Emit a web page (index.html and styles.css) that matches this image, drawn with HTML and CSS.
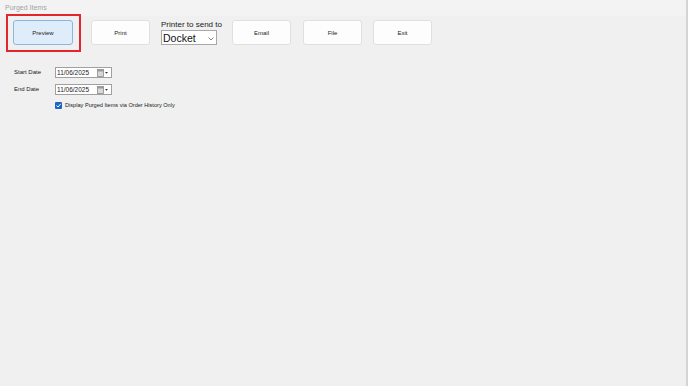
FILE: index.html
```html
<!DOCTYPE html>
<html>
<head>
<meta charset="utf-8">
<link rel="stylesheet" href="styles.css">
</head>
<body>
<div class="window">
  <div class="titlebar">Purged Items</div>
  <div class="toolbar">
    <button class="btn btn-preview">Preview</button>
    <button class="btn btn-print">Print</button>
    <div class="printer">
      <div class="printer-label">Printer to send to</div>
      <div class="select">
        <span>Docket</span>
        <svg class="chev" width="6" height="4" viewBox="0 0 6 4"><path d="M0.5 0.5 L3 3 L5.5 0.5" fill="none" stroke="#666" stroke-width="0.8"/></svg>
      </div>
    </div>
    <button class="btn btn-email">Email</button>
    <button class="btn btn-file">File</button>
    <button class="btn btn-exit">Exit</button>
  </div>
  <div class="form">
    <div class="row">
      <span class="label">Start Date</span>
      <div class="date">
        <span class="date-text">11/06/2025</span>
        <svg class="cal" width="12" height="8" viewBox="0 0 12 8"><rect x="0.5" y="0.5" width="6" height="7" fill="#d8d8d8" stroke="#8a8a8a" stroke-width="0.8"/><rect x="0.5" y="0.5" width="6" height="2" fill="#9a9a9a"/><path d="M8 3 L11 3 L9.5 4.8 Z" fill="#333"/></svg>
      </div>
    </div>
    <div class="row row-end">
      <span class="label">End Date</span>
      <div class="date">
        <span class="date-text">11/06/2025</span>
        <svg class="cal" width="12" height="8" viewBox="0 0 12 8"><rect x="0.5" y="0.5" width="6" height="7" fill="#d8d8d8" stroke="#8a8a8a" stroke-width="0.8"/><rect x="0.5" y="0.5" width="6" height="2" fill="#9a9a9a"/><path d="M8 3 L11 3 L9.5 4.8 Z" fill="#333"/></svg>
      </div>
    </div>
    <div class="check-row">
      <span class="checkbox"><svg width="7" height="7" viewBox="0 0 7 7"><path d="M1.5 3.6 L3 5 L5.6 1.9" fill="none" stroke="#fff" stroke-width="1"/></svg></span>
      <span class="check-label">Display Purged Items via Order History Only</span>
    </div>
  </div>
</div>
</body>
</html>
```

FILE: styles.css
```css
html, body {
  margin: 0;
  padding: 0;
  background: #f0f0f0;
  width: 688px;
  height: 386px;
  overflow: hidden;
  font-family: "Liberation Sans", Arial, sans-serif;
}
.window {
  width: 686px;
  height: 386px;
  border-right: 2px solid #d4d4d4;
  background: #f0f0f0;
}
.titlebar {
  height: 16px;
  background: #f3f3f3;
  color: #a3a3a3;
  font-size: 7px;
  line-height: 15px;
  padding-left: 5px;
  box-sizing: border-box;
}
.toolbar {
  display: flex;
  align-items: flex-start;
  padding: 4px 0 0 13px;
  height: 30px;
}
.btn {
  height: 25px;
  width: 59px;
  background: #fdfdfd;
  border: 1px solid #e0e0e0;
  border-radius: 3px;
  font-family: "Liberation Sans", Arial, sans-serif;
  font-size: 6px;
  color: #1a1a1a;
  padding: 0;
  box-sizing: border-box;
  flex-shrink: 0;
}
.btn-preview {
  width: 60px;
  background: #dfedfa;
  border: 1px solid #86b8e4;
  position: relative;
}
.btn-preview::after {
  content: "";
  position: absolute;
  left: -8px;
  right: -9px;
  top: -7px;
  bottom: -8px;
  border: 2px solid #e3262b;
}
.btn-print { margin-left: 18px; }
.printer {
  margin-left: 11px;
  width: 56px;
  display: flex;
  flex-direction: column;
  flex-shrink: 0;
}
.printer-label {
  font-size: 8px;
  color: #1a1a1a;
  line-height: 10px;
  height: 10px;
  white-space: nowrap;
}
.select {
  width: 56px;
  height: 15px;
  box-sizing: border-box;
  background: #ffffff;
  border: 1px solid #a8a8a8;
  display: flex;
  align-items: center;
  justify-content: space-between;
  padding: 0 2px 0 1px;
  font-size: 10.5px;
  color: #111;
}
.chev { margin-top: 2px; }
.btn-email { margin-left: 15px; }
.btn-file { margin-left: 12px; }
.btn-exit { margin-left: 11px; }
.form {
  padding: 17px 0 0 14px;
}
.row {
  display: flex;
  align-items: center;
  height: 11px;
}
.row-end { margin-top: 6px; }
.label {
  width: 41px;
  font-size: 6px;
  color: #1a1a1a;
  position: relative;
  top: -1px;
}
.date {
  width: 57px;
  height: 11px;
  box-sizing: border-box;
  background: #fff;
  border: 1px solid #a0a0a0;
  display: flex;
  align-items: center;
  justify-content: space-between;
  padding: 0 2px 0 1px;
}
.date-text {
  font-size: 6.5px;
  color: #1a1a1a;
}
.check-row {
  display: flex;
  align-items: center;
  margin: 6px 0 0 41px;
  height: 8px;
}
.checkbox {
  width: 7px;
  height: 7px;
  background: #1a66c4;
  border-radius: 1px;
  display: flex;
}
.check-label {
  margin-left: 3px;
  font-size: 5.6px;
  color: #1a1a1a;
}
```
